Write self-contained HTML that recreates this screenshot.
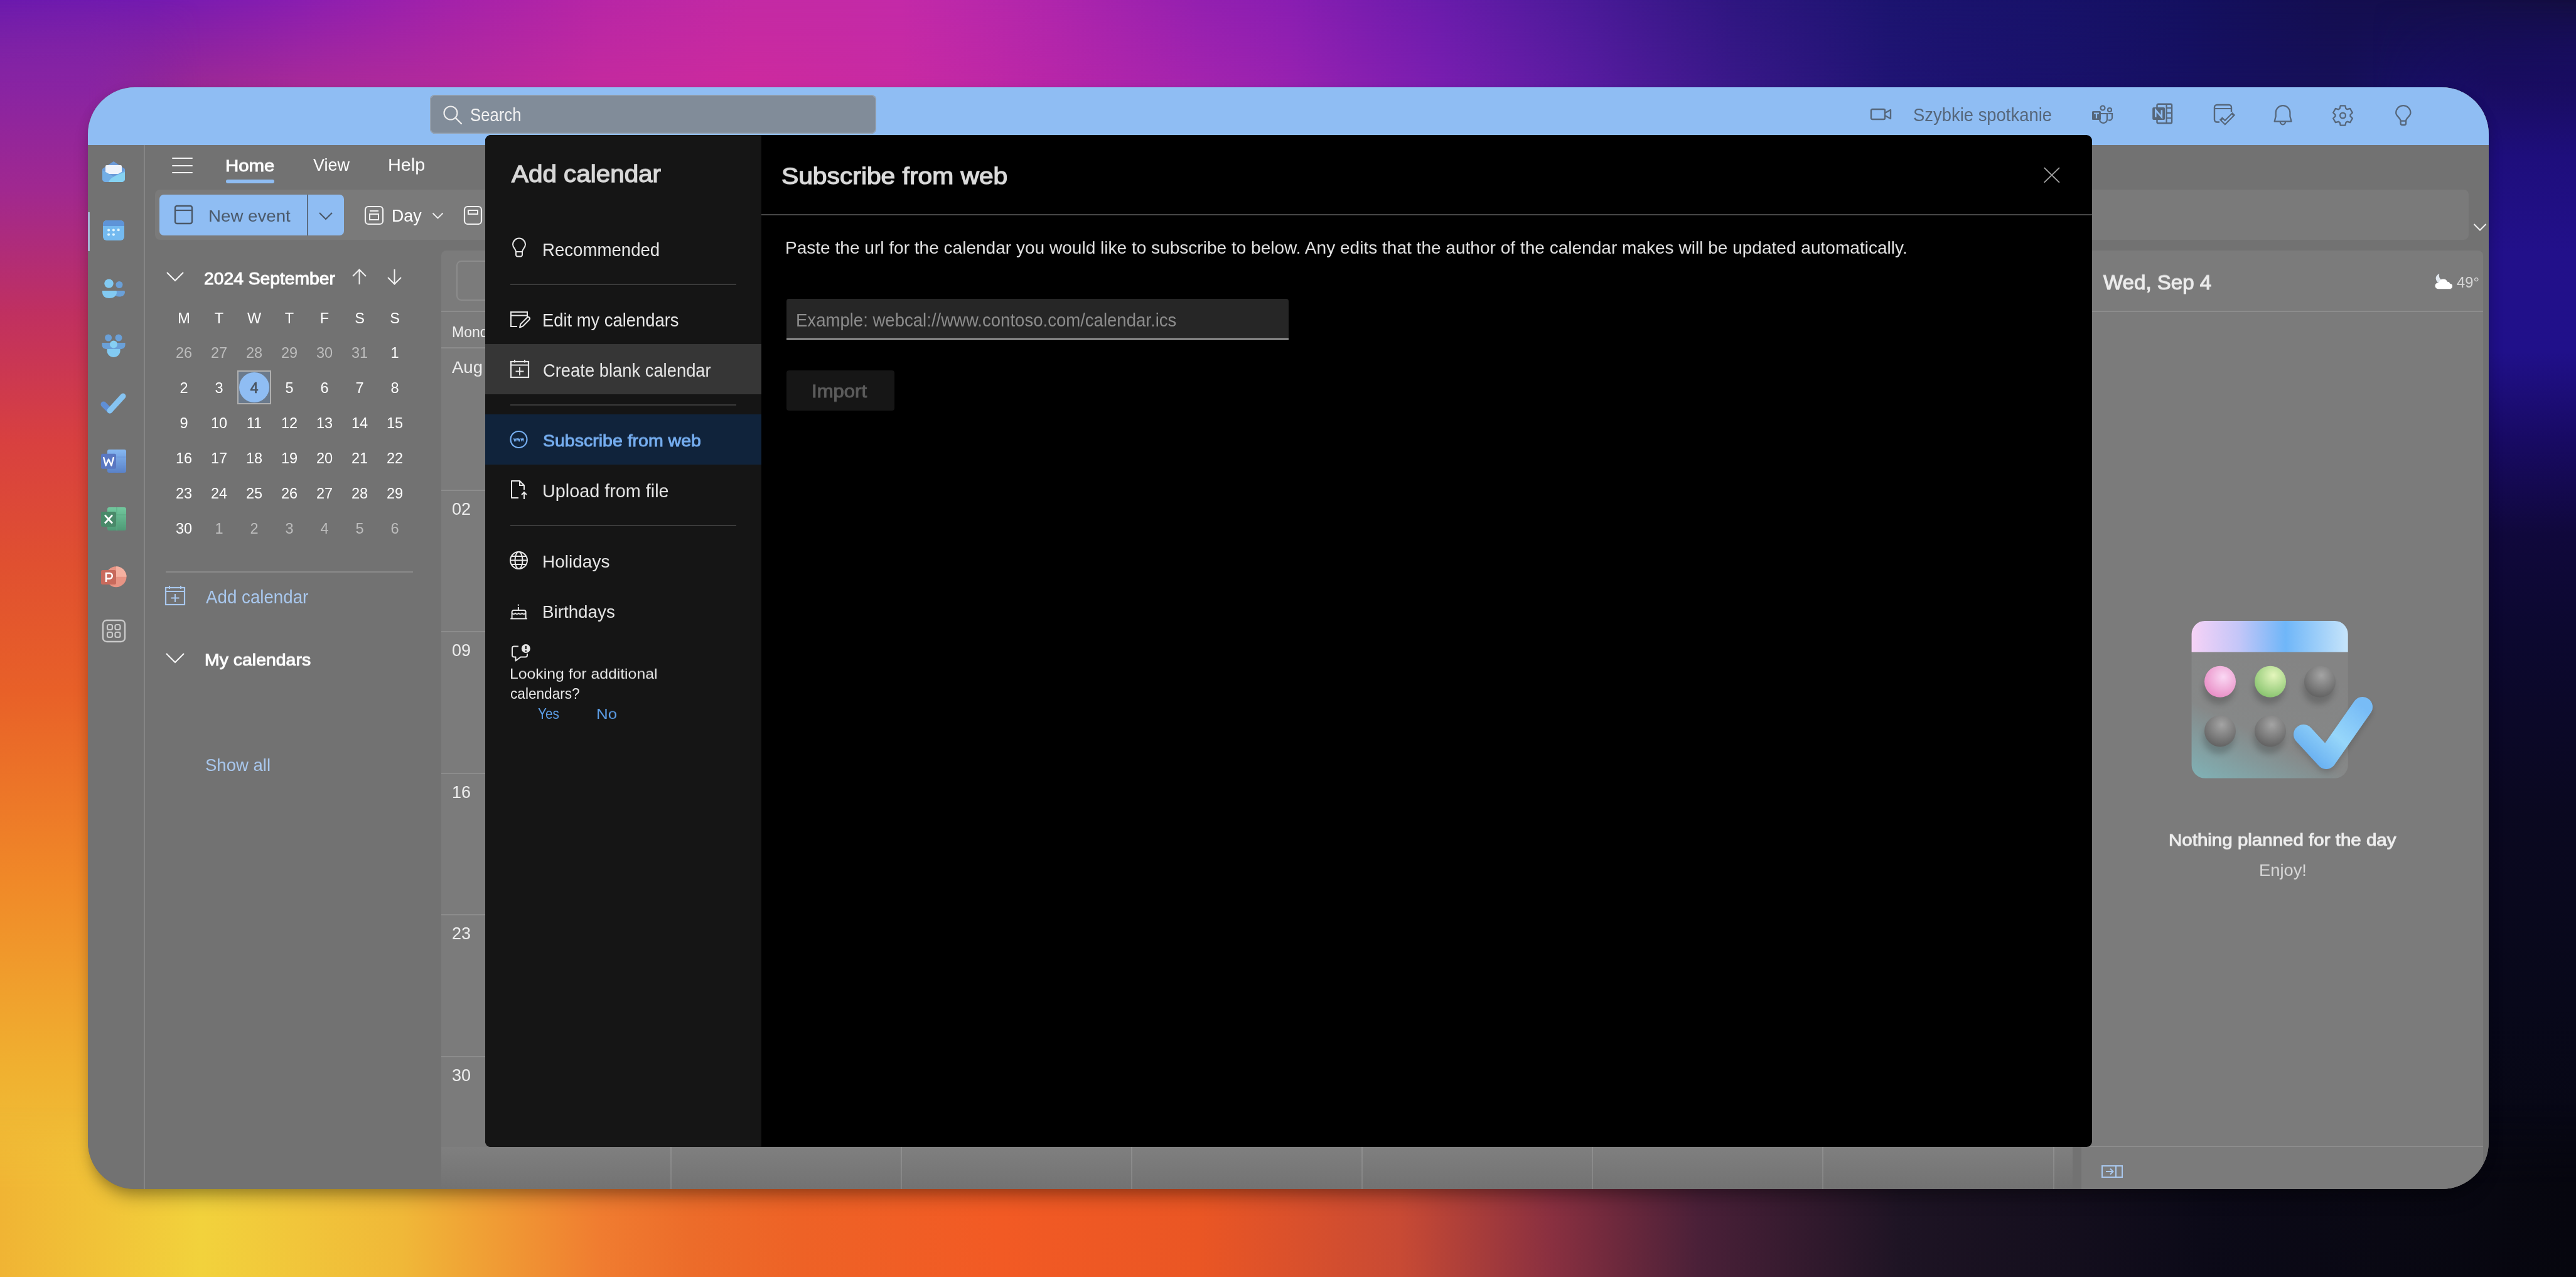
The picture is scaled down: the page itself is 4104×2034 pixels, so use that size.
<!DOCTYPE html>
<html><head><meta charset="utf-8"><style>
html,body{margin:0;padding:0;width:4104px;height:2034px;overflow:hidden;}
body{position:relative;font-family:"Liberation Sans",sans-serif;background:#1a1040;}
.t{position:absolute;white-space:nowrap;will-change:transform;}
.r{position:absolute;}
svg.r{overflow:visible;}
</style></head><body>
<div class="r" style="left:0px;top:0px;width:4104px;height:320px;background:linear-gradient(90deg,#6c1aae 0px,#741bb0 239px,#8a1eb0 478px,#a422aa 717px,#b826a6 956px,#c42aa4 1195px,#c42aa8 1434px,#b026ac 1673px,#9420b0 1912px,#8a1eb2 2052px,#6a1cac 2291px,#4a1a98 2530px,#2e1680 2769px,#1c1470 3008px,#18126a 3247px,#141060 3486px,#140e50 3725px,#140e48 3964px,#140e40 4104px);"></div><div class="r" style="left:0px;top:0px;width:4104px;height:320px;background:linear-gradient(90deg,#8a2898 0px,#962894 239px,#a82a98 478px,#b42a9c 717px,#c42a9e 956px,#cc2a9e 1195px,#c82aa2 1434px,#b826a8 1673px,#a424ae 1912px,#9822b0 2052px,#7a1eb0 2291px,#581ca0 2530px,#381888 2769px,#201474 3008px,#1a126c 3247px,#161062 3486px,#161058 3725px,#181070 3964px,#1c1080 4104px);-webkit-mask-image:linear-gradient(180deg,transparent 0px,#000 139px);"></div><div class="r" style="left:0px;top:0px;width:320px;height:2034px;background:linear-gradient(180deg,#7420b2 0px,#a02890 300px,#c03060 500px,#d84040 700px,#e05030 900px,#e86028 1100px,#f08828 1400px,#f0b030 1700px,#f0d040 2034px);-webkit-mask-image:linear-gradient(180deg,transparent 0px,#000 140px),linear-gradient(90deg,#000 140px,transparent 320px);-webkit-mask-composite:source-in;"></div><div class="r" style="left:3780px;top:0px;width:324px;height:2034px;background:linear-gradient(180deg,#140c48 0px,#180c5c 120px,#1e0e7c 250px,#22108a 400px,#20108a 560px,#180a64 700px,#10083c 850px,#0c0830 1000px,#0a0820 1300px,#08081a 1600px,#06060e 2034px);-webkit-mask-image:linear-gradient(180deg,transparent 0px,#000 140px),linear-gradient(90deg,transparent 0px,#000 185px);-webkit-mask-composite:source-in;"></div><div class="r" style="left:0px;top:1760px;width:4104px;height:274px;background:linear-gradient(90deg,#f0b434 0px,#f2d23c 320px,#f0b838 640px,#f07c30 956px,#ec6c2a 1100px,#ee6226 1274px,#f25a24 1593px,#ea5624 1911px,#c84a34 2230px,#8a3040 2469px,#4a2038 2708px,#1e1424 3027px,#0c0a18 3505px,#06060e 4104px);-webkit-mask-image:linear-gradient(180deg,transparent 0px,#000 134px);"></div><div class="r" style="left:140px;top:139px;width:3825px;height:1755px;border-radius:75px;background:#727272;box-shadow:0 20px 30px -10px rgba(0,0,0,0.34), 0 4px 18px rgba(0,0,0,0.10);"></div><div class="r" style="left:0;top:0;width:4104px;height:2034px;clip-path:inset(139px 139px 140px 140px round 75px);"><div class="r" style="left:140px;top:139px;width:3825px;height:1755px;background:#727272;"></div><div class="r" style="left:140px;top:139px;width:3825px;height:92px;background:#8fbdf3;"></div><div class="r" style="left:685px;top:151px;width:711px;height:62px;background:#818c99;border-radius:8px;box-shadow:inset 0 0 0 1.5px #95a3b3;"></div><svg class="r" style="left:704px;top:166px;" width="34" height="34" viewBox="0 0 34 34"><circle cx="14" cy="14" r="10.5" fill="none" stroke="#ececec" stroke-width="2.2"/><line x1="21.5" y1="21.5" x2="31" y2="31" stroke="#ececec" stroke-width="2.4" stroke-linecap="round"/></svg><div class="t" style="left:748.97px;top:172.23px;font-size:25.714px;line-height:25.714px;color:#f2f2f2;transform:scaleY(1.1135);transform-origin:0 21.77px;">Search</div><svg class="r" style="left:2978px;top:170px;" width="40" height="24" viewBox="0 0 40 24"><rect x="3" y="4" width="22" height="16" rx="2" fill="none" stroke="#56677b" stroke-width="2.4"/><path d="M25 10 L34 5 L34 19 L25 14" fill="none" stroke="#56677b" stroke-width="2.4" stroke-linejoin="round"/></svg><div class="t" style="left:3047.90px;top:169.78px;font-size:27.430px;line-height:27.430px;color:#56677b;transform:scaleY(1.0794);transform-origin:0 23.22px;">Szybkie spotkanie</div><svg class="r" style="left:3331px;top:166px;" width="38" height="34" viewBox="0 0 38 34"><circle cx="19" cy="6" r="3.5" fill="none" stroke="#56677b" stroke-width="2.2"/><circle cx="30" cy="9" r="3" fill="none" stroke="#56677b" stroke-width="2.2"/><path d="M14 15 h12 v9 a6 6 0 0 1 -12 0 z" fill="none" stroke="#56677b" stroke-width="2.2"/><path d="M28 15 h6 v7 a4 4 0 0 1 -6 3" fill="none" stroke="#56677b" stroke-width="2.2"/><rect x="2" y="11" width="14" height="14" rx="1.5" fill="#56677b"/><path d="M5 14.5 h8 M9 14.5 v8" stroke="#8fbdf3" stroke-width="2.2"/></svg><svg class="r" style="left:3428px;top:164px;" width="36" height="36" viewBox="0 0 36 36"><rect x="8.5" y="1.8" width="23.6" height="30.4" rx="2" fill="none" stroke="#56677b" stroke-width="2.4"/><line x1="23.6" y1="1.8" x2="23.6" y2="32.2" stroke="#56677b" stroke-width="2.2"/><path d="M23.6 8 H32 M23.6 15.8 H32 M23.6 24 H32" stroke="#56677b" stroke-width="2.2"/><rect x="1.2" y="7" width="19.9" height="19.9" rx="2" fill="#56677b"/><path d="M6.3 22.5 V11.3 L15.9 22.5 V11.3" fill="none" stroke="#8fbdf3" stroke-width="2.6" stroke-linejoin="miter"/></svg><svg class="r" style="left:3525px;top:164px;" width="40" height="36" viewBox="0 0 40 36"><path d="M11 30.5 H7 a4 4 0 0 1 -4 -4 V7 a4 4 0 0 1 4 -4 H26 a4 4 0 0 1 4 4 V14" fill="none" stroke="#56677b" stroke-width="2.4"/><line x1="3" y1="9" x2="30" y2="9" stroke="#56677b" stroke-width="2.2"/><path d="M15.5 26.8 L19.8 31 L31.5 19.3" fill="none" stroke="#56677b" stroke-width="6.6" stroke-linejoin="miter" stroke-linecap="square"/><path d="M15.5 26.8 L19.8 31 L31.5 19.3" fill="none" stroke="#8fbdf3" stroke-width="2.4" stroke-linejoin="miter" stroke-linecap="butt"/></svg><svg class="r" style="left:3620px;top:166px;" width="36" height="36" viewBox="0 0 36 36"><path d="M5.7 19.3 V13.5 a11.35 11.4 0 0 1 22.7 0 V19.3 L30.5 27.4 H3.7 z" fill="none" stroke="#56677b" stroke-width="2.3" stroke-linejoin="round"/><path d="M12.8 28 a4.1 4.3 0 0 0 8.2 0" fill="none" stroke="#56677b" stroke-width="2.3"/></svg><svg class="r" style="left:3716px;top:167px;" width="34" height="34" viewBox="0 0 34 34"><polygon points="12.70,1.46 20.30,1.46 21.39,6.04 23.47,7.23 28.06,5.94 31.86,12.52 28.44,15.76 28.44,18.16 31.86,21.48 28.06,28.06 23.54,26.72 21.47,27.92 20.30,32.54 12.70,32.54 11.61,27.96 9.53,26.77 4.94,28.06 1.14,21.48 4.56,18.24 4.56,15.84 1.14,12.52 4.94,5.94 9.46,7.28 11.53,6.08" fill="none" stroke="#56677b" stroke-width="2.3" stroke-linejoin="round"/><circle cx="16.5" cy="17" r="4.4" fill="none" stroke="#56677b" stroke-width="2.3"/></svg><svg class="r" style="left:3813px;top:166px;" width="32" height="36" viewBox="0 0 32 36"><path d="M11.6 26.6 C11.6 22 4.2 19 4.2 13.7 a11.6 11.6 0 0 1 23.2 0 C27.4 19 20.1 22 20.1 26.6 z" fill="none" stroke="#56677b" stroke-width="2.3" stroke-linejoin="round"/><path d="M11.6 26.6 V30.2 a2.8 2.8 0 0 0 2.8 2.8 H17.3 a2.8 2.8 0 0 0 2.8 -2.8 V26.6" fill="none" stroke="#56677b" stroke-width="2.3"/></svg><div class="r" style="left:229px;top:231px;width:2px;height:1663px;background:#858585;"></div><div class="r" style="left:140px;top:338px;width:2.5px;height:62px;background:#a3b6d4;"></div><svg class="r" style="left:160px;top:254px;" width="42" height="40" viewBox="0 0 42 40"><path d="M3 15 L21 3 L39 15 V31 a5 5 0 0 1 -5 5 H8 a5 5 0 0 1 -5 -5 z" fill="#6a9ad8"/><rect x="8" y="9" width="26" height="14" rx="2" fill="#eef3fb"/><path d="M3 17 L21 27 L39 17 V31 a5 5 0 0 1 -5 5 H8 a5 5 0 0 1 -5 -5 z" fill="#72aee6"/><path d="M13 36 C16 28 26 25 39 20 V31 a5 5 0 0 1 -5 5 z" fill="#86d2f2"/></svg><svg class="r" style="left:162px;top:349px;" width="38" height="36" viewBox="0 0 38 36"><rect x="2" y="2" width="34" height="32" rx="6" fill="#74baf0"/><path d="M2 11 V8 a6 6 0 0 1 6 -6 H30 a6 6 0 0 1 6 6 V11 z" fill="#5e94d8"/><g fill="#dff4fd"><circle cx="11.1" cy="17.5" r="2.1"/><circle cx="18.9" cy="17.5" r="2.1"/><circle cx="26.7" cy="17.2" r="2.1"/><circle cx="11.1" cy="24.6" r="2.1"/><circle cx="18.9" cy="24.6" r="2.1"/></g></svg><svg class="r" style="left:160px;top:441px;" width="42" height="36" viewBox="0 0 42 36"><circle cx="30" cy="12.5" r="5.5" fill="#6aa0d8"/><path d="M22 22 H37 a2 2 0 0 1 2 2 C39 29 35 31.5 30 31.5 C26 31.5 23 30 22 28 z" fill="#6aa0d8"/><circle cx="13.5" cy="10.6" r="7.2" fill="#82caf2"/><path d="M3 22 H24 a2 2 0 0 1 2 2 C26 31 20 34 14 34 C8 34 3 31 3 24 a2 2 0 0 1 0 0 z" fill="#82caf2"/></svg><svg class="r" style="left:160px;top:530px;" width="42" height="42" viewBox="0 0 42 42"><circle cx="12.6" cy="8" r="5.5" fill="#6aa0d8"/><circle cx="29" cy="8" r="5.5" fill="#6aa0d8"/><path d="M2.5 16 H39.5 V19 C39.5 24 36 26 32 26 H10 C6 26 2.5 24 2.5 19 z" fill="#6aa0d8"/><path d="M10.5 26 H31.5 V29 C31.5 35 26 39 21 39 C16 39 10.5 35 10.5 29 z" fill="#82caf2"/><circle cx="21" cy="18.5" r="6" fill="#86cff4"/></svg><svg class="r" style="left:158px;top:622px;" width="46" height="40" viewBox="0 0 46 40"><path d="M7 22 L17 32" stroke="#5f8fd6" stroke-width="9" stroke-linecap="round"/><path d="M17 32 L38 9" stroke="#86c4f2" stroke-width="9" stroke-linecap="round"/></svg><svg class="r" style="left:158px;top:713px;" width="46" height="44" viewBox="0 0 46 44"><defs><linearGradient id="wg" x1="0" y1="0" x2="0" y2="1"><stop offset="0" stop-color="#86b8f2"/><stop offset="1" stop-color="#5a82c8"/></linearGradient></defs><rect x="13" y="3" width="30" height="37" rx="3" fill="url(#wg)"/><path d="M13 15 H43 M13 27 H43" stroke="#6a96da" stroke-width="1"/><rect x="3" y="9.7" width="24" height="24" rx="2.5" fill="#5a78c2"/><path d="M7 15 L10.5 28.5 L15 18.5 L19.5 28.5 L23 15" fill="none" stroke="#fff" stroke-width="2.4" stroke-linejoin="round"/></svg><svg class="r" style="left:158px;top:805px;" width="46" height="44" viewBox="0 0 46 44"><defs><linearGradient id="xg" x1="0" y1="0" x2="0" y2="1"><stop offset="0" stop-color="#72c89e"/><stop offset="1" stop-color="#4f9a76"/></linearGradient></defs><rect x="13" y="3" width="30" height="37" rx="3" fill="url(#xg)"/><path d="M28 3 V40 M13 15 H43 M13 27 H43" stroke="#5aaa82" stroke-width="1"/><rect x="3" y="10" width="24" height="24" rx="2.5" fill="#4a8a6a"/><path d="M9 15.5 L21 28.5 M21 15.5 L9 28.5" fill="none" stroke="#fff" stroke-width="2.6"/></svg><svg class="r" style="left:158px;top:898px;" width="46" height="44" viewBox="0 0 46 44"><circle cx="27" cy="20.7" r="16.5" fill="#e89484"/><path d="M27 4.2 A16.5 16.5 0 0 1 43.5 20.7 H27 z" fill="#f4b0a0"/><rect x="3" y="10" width="24" height="23" rx="2.5" fill="#c86a5c"/><path d="M11 29 V15 H16.5 a4.3 4.3 0 0 1 0 8.6 H11" fill="none" stroke="#fff" stroke-width="2.6"/></svg><svg class="r" style="left:161px;top:985px;" width="40" height="40" viewBox="0 0 40 40"><rect x="3" y="3" width="35" height="34" rx="6" fill="none" stroke="#c9c9c9" stroke-width="2.4"/><g fill="none" stroke="#c9c9c9" stroke-width="2.2"><rect x="10" y="10" width="8" height="8" rx="2.5"/><rect x="22.5" y="10" width="8" height="8" rx="2.5"/><rect x="10" y="22" width="8" height="8" rx="2.5"/><rect x="22.5" y="22" width="8" height="8" rx="2.5"/></g></svg><div class="r" style="left:274px;top:251px;width:33px;height:2.1999999999999886px;background:#f4f4f4;border-radius:1px;"></div><div class="r" style="left:274px;top:262.5px;width:33px;height:2.1999999999999886px;background:#f4f4f4;border-radius:1px;"></div><div class="r" style="left:274px;top:274px;width:33px;height:2.1999999999999886px;background:#f4f4f4;border-radius:1px;"></div><div class="t" style="left:359.16px;top:247.62px;font-size:29.391px;line-height:29.391px;color:#ffffff;-webkit-text-stroke:1.01px #ffffff;transform:scaleY(0.9048);transform-origin:0 24.88px;">Home</div><div class="r" style="left:360px;top:286px;width:77px;height:6px;background:#8fbdf3;border-radius:3px;"></div><div class="t" style="left:498.80px;top:249.66px;font-size:26.979px;line-height:26.979px;color:#ffffff;transform:scaleY(1.0095);transform-origin:0 22.84px;">View</div><div class="t" style="left:617.69px;top:248.07px;font-size:28.859px;line-height:28.859px;color:#ffffff;transform:scaleY(0.9437);transform-origin:0 24.43px;">Help</div><div class="r" style="left:247px;top:302px;width:3686px;height:80px;background:#7a7a7a;border-radius:8px;"></div><div class="r" style="left:3941px;top:357px;width:20px;height:12px;background:transparent;"></div><svg class="r" style="left:3940px;top:355px;" width="22" height="14" viewBox="0 0 22 14"><path d="M1.5 2 L11 11.5 L20.5 2" fill="none" stroke="#f0f0f0" stroke-width="2"/></svg><div class="r" style="left:254px;top:310px;width:294px;height:65px;background:#8fbdf3;border-radius:7px;"></div><div class="r" style="left:489px;top:310px;width:1.5px;height:65px;background:#5c6d82;"></div><svg class="r" style="left:277px;top:326px;" width="32" height="32" viewBox="0 0 32 32"><rect x="2" y="2" width="27" height="28" rx="3" fill="none" stroke="#4a5868" stroke-width="2.4"/><line x1="2" y1="9" x2="29" y2="9" stroke="#4a5868" stroke-width="2.2"/></svg><div class="t" style="left:331.58px;top:329.75px;font-size:27.697px;line-height:27.697px;color:#4a5868;transform:scaleY(0.9480);transform-origin:0 23.45px;">New event</div><svg class="r" style="left:507px;top:337px;" width="24" height="15" viewBox="0 0 24 15"><path d="M2 2 L12 12 L22 2" fill="none" stroke="#4a5868" stroke-width="2.2"/></svg><svg class="r" style="left:580px;top:327px;" width="32" height="32" viewBox="0 0 32 32"><rect x="2" y="2" width="28" height="28" rx="5" fill="none" stroke="#f0f0f0" stroke-width="2.2"/><line x1="9" y1="9" x2="23" y2="9" stroke="#f0f0f0" stroke-width="2"/><rect x="9" y="14" width="14" height="9" fill="none" stroke="#f0f0f0" stroke-width="2"/></svg><div class="t" style="left:623.86px;top:331.17px;font-size:26.732px;line-height:26.732px;color:#ffffff;transform:scaleY(1.0083);transform-origin:0 22.63px;">Day</div><svg class="r" style="left:688px;top:338px;" width="19" height="12" viewBox="0 0 19 12"><path d="M1.5 1.5 L9.5 9.5 L17.5 1.5" fill="none" stroke="#f0f0f0" stroke-width="1.8"/></svg><svg class="r" style="left:738px;top:327px;" width="32" height="32" viewBox="0 0 32 32"><rect x="2" y="2" width="27" height="28" rx="5" fill="none" stroke="#f0f0f0" stroke-width="2.2"/><rect x="8" y="8" width="15" height="6" fill="none" stroke="#f0f0f0" stroke-width="2"/></svg><svg class="r" style="left:264px;top:432px;" width="30" height="18" viewBox="0 0 30 18"><path d="M2 2 L15 15 L28 2" fill="none" stroke="#f4f4f4" stroke-width="2.2"/></svg><div class="t" style="left:324.77px;top:428.67px;font-size:28.267px;line-height:28.267px;color:#ffffff;-webkit-text-stroke:0.98px #ffffff;transform:scaleY(0.9939);transform-origin:0 23.93px;">2024 September</div><svg class="r" style="left:558px;top:427px;" width="30" height="28" viewBox="0 0 30 28"><path d="M14.5 26 V3 M4 13 L14.5 2.5 L25 13" fill="none" stroke="#f0f0f0" stroke-width="2"/></svg><svg class="r" style="left:614px;top:427px;" width="30" height="28" viewBox="0 0 30 28"><path d="M14.5 2 V25 M4 15 L14.5 25.5 L25 15" fill="none" stroke="#f0f0f0" stroke-width="2"/></svg><div class="t" style="left:-707.4px;width:2000px;text-align:center;top:495.8px;font-size:23.5px;line-height:23.5px;color:#ffffff;">M</div><div class="t" style="left:-651.0px;width:2000px;text-align:center;top:495.8px;font-size:23.5px;line-height:23.5px;color:#ffffff;">T</div><div class="t" style="left:-595.4px;width:2000px;text-align:center;top:495.8px;font-size:23.5px;line-height:23.5px;color:#ffffff;">W</div><div class="t" style="left:-539.0px;width:2000px;text-align:center;top:495.8px;font-size:23.5px;line-height:23.5px;color:#ffffff;">T</div><div class="t" style="left:-483.0px;width:2000px;text-align:center;top:495.8px;font-size:23.5px;line-height:23.5px;color:#ffffff;">F</div><div class="t" style="left:-427.4px;width:2000px;text-align:center;top:495.8px;font-size:23.5px;line-height:23.5px;color:#ffffff;">S</div><div class="t" style="left:-371.0px;width:2000px;text-align:center;top:495.8px;font-size:23.5px;line-height:23.5px;color:#ffffff;">S</div><div class="r" style="left:378px;top:590px;width:54px;height:54px;background:#6b7a8c;box-shadow:inset 0 0 0 2px #b0b0b0;"></div><div class="r" style="left:381px;top:593px;width:48px;height:48px;border-radius:50%;background:#8fbdf3;"></div><div class="t" style="left:-707.4px;width:2000px;text-align:center;top:550.7px;font-size:23.5px;line-height:23.5px;color:#bdbdbd;">26</div><div class="t" style="left:-651.0px;width:2000px;text-align:center;top:550.7px;font-size:23.5px;line-height:23.5px;color:#bdbdbd;">27</div><div class="t" style="left:-595.4px;width:2000px;text-align:center;top:550.7px;font-size:23.5px;line-height:23.5px;color:#bdbdbd;">28</div><div class="t" style="left:-539.0px;width:2000px;text-align:center;top:550.7px;font-size:23.5px;line-height:23.5px;color:#bdbdbd;">29</div><div class="t" style="left:-483.0px;width:2000px;text-align:center;top:550.7px;font-size:23.5px;line-height:23.5px;color:#bdbdbd;">30</div><div class="t" style="left:-427.4px;width:2000px;text-align:center;top:550.7px;font-size:23.5px;line-height:23.5px;color:#bdbdbd;">31</div><div class="t" style="left:-371.0px;width:2000px;text-align:center;top:550.7px;font-size:23.5px;line-height:23.5px;color:#ffffff;">1</div><div class="t" style="left:-707.4px;width:2000px;text-align:center;top:607.4px;font-size:23.5px;line-height:23.5px;color:#ffffff;">2</div><div class="t" style="left:-651.0px;width:2000px;text-align:center;top:607.4px;font-size:23.5px;line-height:23.5px;color:#ffffff;">3</div><div class="t" style="left:-595.4px;width:2000px;text-align:center;top:607.4px;font-size:23.5px;line-height:23.5px;color:#4a5562;-webkit-text-stroke:0.7px #4a5562;">4</div><div class="t" style="left:-539.0px;width:2000px;text-align:center;top:607.4px;font-size:23.5px;line-height:23.5px;color:#ffffff;">5</div><div class="t" style="left:-483.0px;width:2000px;text-align:center;top:607.4px;font-size:23.5px;line-height:23.5px;color:#ffffff;">6</div><div class="t" style="left:-427.4px;width:2000px;text-align:center;top:607.4px;font-size:23.5px;line-height:23.5px;color:#ffffff;">7</div><div class="t" style="left:-371.0px;width:2000px;text-align:center;top:607.4px;font-size:23.5px;line-height:23.5px;color:#ffffff;">8</div><div class="t" style="left:-707.4px;width:2000px;text-align:center;top:662.7px;font-size:23.5px;line-height:23.5px;color:#ffffff;">9</div><div class="t" style="left:-651.0px;width:2000px;text-align:center;top:662.7px;font-size:23.5px;line-height:23.5px;color:#ffffff;">10</div><div class="t" style="left:-595.4px;width:2000px;text-align:center;top:662.7px;font-size:23.5px;line-height:23.5px;color:#ffffff;">11</div><div class="t" style="left:-539.0px;width:2000px;text-align:center;top:662.7px;font-size:23.5px;line-height:23.5px;color:#ffffff;">12</div><div class="t" style="left:-483.0px;width:2000px;text-align:center;top:662.7px;font-size:23.5px;line-height:23.5px;color:#ffffff;">13</div><div class="t" style="left:-427.4px;width:2000px;text-align:center;top:662.7px;font-size:23.5px;line-height:23.5px;color:#ffffff;">14</div><div class="t" style="left:-371.0px;width:2000px;text-align:center;top:662.7px;font-size:23.5px;line-height:23.5px;color:#ffffff;">15</div><div class="t" style="left:-707.4px;width:2000px;text-align:center;top:719.4px;font-size:23.5px;line-height:23.5px;color:#ffffff;">16</div><div class="t" style="left:-651.0px;width:2000px;text-align:center;top:719.4px;font-size:23.5px;line-height:23.5px;color:#ffffff;">17</div><div class="t" style="left:-595.4px;width:2000px;text-align:center;top:719.4px;font-size:23.5px;line-height:23.5px;color:#ffffff;">18</div><div class="t" style="left:-539.0px;width:2000px;text-align:center;top:719.4px;font-size:23.5px;line-height:23.5px;color:#ffffff;">19</div><div class="t" style="left:-483.0px;width:2000px;text-align:center;top:719.4px;font-size:23.5px;line-height:23.5px;color:#ffffff;">20</div><div class="t" style="left:-427.4px;width:2000px;text-align:center;top:719.4px;font-size:23.5px;line-height:23.5px;color:#ffffff;">21</div><div class="t" style="left:-371.0px;width:2000px;text-align:center;top:719.4px;font-size:23.5px;line-height:23.5px;color:#ffffff;">22</div><div class="t" style="left:-707.4px;width:2000px;text-align:center;top:774.7px;font-size:23.5px;line-height:23.5px;color:#ffffff;">23</div><div class="t" style="left:-651.0px;width:2000px;text-align:center;top:774.7px;font-size:23.5px;line-height:23.5px;color:#ffffff;">24</div><div class="t" style="left:-595.4px;width:2000px;text-align:center;top:774.7px;font-size:23.5px;line-height:23.5px;color:#ffffff;">25</div><div class="t" style="left:-539.0px;width:2000px;text-align:center;top:774.7px;font-size:23.5px;line-height:23.5px;color:#ffffff;">26</div><div class="t" style="left:-483.0px;width:2000px;text-align:center;top:774.7px;font-size:23.5px;line-height:23.5px;color:#ffffff;">27</div><div class="t" style="left:-427.4px;width:2000px;text-align:center;top:774.7px;font-size:23.5px;line-height:23.5px;color:#ffffff;">28</div><div class="t" style="left:-371.0px;width:2000px;text-align:center;top:774.7px;font-size:23.5px;line-height:23.5px;color:#ffffff;">29</div><div class="t" style="left:-707.4px;width:2000px;text-align:center;top:831.4px;font-size:23.5px;line-height:23.5px;color:#ffffff;">30</div><div class="t" style="left:-651.0px;width:2000px;text-align:center;top:831.4px;font-size:23.5px;line-height:23.5px;color:#bdbdbd;">1</div><div class="t" style="left:-595.4px;width:2000px;text-align:center;top:831.4px;font-size:23.5px;line-height:23.5px;color:#bdbdbd;">2</div><div class="t" style="left:-539.0px;width:2000px;text-align:center;top:831.4px;font-size:23.5px;line-height:23.5px;color:#bdbdbd;">3</div><div class="t" style="left:-483.0px;width:2000px;text-align:center;top:831.4px;font-size:23.5px;line-height:23.5px;color:#bdbdbd;">4</div><div class="t" style="left:-427.4px;width:2000px;text-align:center;top:831.4px;font-size:23.5px;line-height:23.5px;color:#bdbdbd;">5</div><div class="t" style="left:-371.0px;width:2000px;text-align:center;top:831.4px;font-size:23.5px;line-height:23.5px;color:#bdbdbd;">6</div><div class="r" style="left:264px;top:910px;width:394px;height:2px;background:#8a8a8a;"></div><svg class="r" style="left:261px;top:931px;" width="36" height="34" viewBox="0 0 36 34"><rect x="3" y="5" width="30" height="27" fill="none" stroke="#a9c8ee" stroke-width="2.2"/><line x1="3" y1="11" x2="33" y2="11" stroke="#a9c8ee" stroke-width="2"/><line x1="9" y1="2" x2="9" y2="7" stroke="#a9c8ee" stroke-width="2"/><line x1="27" y1="2" x2="27" y2="7" stroke="#a9c8ee" stroke-width="2"/><path d="M18 15 V28 M11.5 21.5 H24.5" stroke="#a9c8ee" stroke-width="2"/></svg><div class="t" style="left:327.70px;top:938.03px;font-size:27.721px;line-height:27.721px;color:#a9c8ee;transform:scaleY(1.0328);transform-origin:0 23.47px;">Add calendar</div><svg class="r" style="left:263px;top:1039px;" width="32" height="20" viewBox="0 0 32 20"><path d="M2 2 L16 16 L30 2" fill="none" stroke="#f4f4f4" stroke-width="2.2"/></svg><div class="t" style="left:325.92px;top:1035.92px;font-size:28.444px;line-height:28.444px;color:#ffffff;-webkit-text-stroke:0.98px #ffffff;transform:scaleY(0.9589);transform-origin:0 24.08px;">My calendars</div><div class="t" style="left:326.60px;top:1205.38px;font-size:27.545px;line-height:27.545px;color:#a9c8ee;transform:scaleY(0.9989);transform-origin:0 23.32px;">Show all</div><div class="r" style="left:703px;top:399px;width:2599px;height:1495px;background:#7b7b7b;border-top-left-radius:8px;border-top-right-radius:8px;"></div><div class="r" style="left:727px;top:415px;width:173px;height:64px;background:transparent;border:2px solid #8c8c8c;border-radius:8px;box-sizing:border-box;"></div><div class="r" style="left:703px;top:494.5px;width:2599px;height:2.0px;background:#8c8c8c;"></div><div class="t" style="left:720.0px;top:517.5px;font-size:23px;line-height:23px;color:#eeeeee;">Monday</div><div class="r" style="left:703px;top:553px;width:2599px;height:2px;background:#8c8c8c;"></div><div class="t" style="left:720.00px;top:571.47px;font-size:27.566px;line-height:27.566px;color:#eeeeee;transform:scaleY(0.9627);transform-origin:0 23.33px;">Aug</div><div class="r" style="left:703px;top:780px;width:2599px;height:2px;background:#8c8c8c;"></div><div class="t" style="left:720.0px;top:798.1px;font-size:27px;line-height:27px;color:#eeeeee;">02</div><div class="r" style="left:703px;top:1005px;width:2599px;height:2px;background:#8c8c8c;"></div><div class="t" style="left:720.0px;top:1023.1px;font-size:27px;line-height:27px;color:#eeeeee;">09</div><div class="r" style="left:703px;top:1231px;width:2599px;height:2px;background:#8c8c8c;"></div><div class="t" style="left:720.0px;top:1249.1px;font-size:27px;line-height:27px;color:#eeeeee;">16</div><div class="r" style="left:703px;top:1456px;width:2599px;height:2px;background:#8c8c8c;"></div><div class="t" style="left:720.0px;top:1474.1px;font-size:27px;line-height:27px;color:#eeeeee;">23</div><div class="r" style="left:703px;top:1682px;width:2599px;height:2px;background:#8c8c8c;"></div><div class="t" style="left:720.0px;top:1700.1px;font-size:27px;line-height:27px;color:#eeeeee;">30</div><div class="r" style="left:1068px;top:399px;width:2px;height:1495px;background:#8c8c8c;"></div><div class="r" style="left:1435px;top:399px;width:2px;height:1495px;background:#8c8c8c;"></div><div class="r" style="left:1802px;top:399px;width:2px;height:1495px;background:#8c8c8c;"></div><div class="r" style="left:2169px;top:399px;width:2px;height:1495px;background:#8c8c8c;"></div><div class="r" style="left:2536px;top:399px;width:2px;height:1495px;background:#8c8c8c;"></div><div class="r" style="left:2903px;top:399px;width:2px;height:1495px;background:#8c8c8c;"></div><div class="r" style="left:3271px;top:399px;width:2px;height:1495px;background:#8c8c8c;"></div><div class="r" style="left:703px;top:1827px;width:2599px;height:67px;background:linear-gradient(180deg,rgba(255,255,255,0.03) 0,rgba(0,0,0,0.07) 100%);"></div><div class="r" style="left:3316px;top:399px;width:640px;height:1495px;background:#7b7b7b;border-top-left-radius:8px;border-top-right-radius:8px;"></div><div class="t" style="left:3350.57px;top:432.60px;font-size:33.075px;line-height:33.075px;color:#ececec;-webkit-text-stroke:1.14px #ececec;transform:scaleY(0.9813);transform-origin:0 28.00px;">Wed, Sep 4</div><svg class="r" style="left:3877px;top:433px;" width="36" height="32" viewBox="0 0 36 32"><circle cx="11.5" cy="10.5" r="7.8" fill="#e2e8ef"/><circle cx="15.8" cy="6.2" r="7" fill="#7b7b7b"/><path d="M6.2 27 a4.9 4.9 0 0 1 2.5 -9.6 a7 7 0 0 1 13.4 -1.6 a3.9 3.9 0 0 1 4 3 a3.9 3.9 0 0 1 -0.3 8.2 z" fill="#ffffff"/><path d="M6.5 27.6 H28.5" stroke="#959595" stroke-width="1.2"/></svg><div class="t" style="left:3913.53px;top:438.91px;font-size:23.738px;line-height:23.738px;color:#d6d6d6;transform:scaleY(1.0002);transform-origin:0 20.09px;">49°</div><div class="r" style="left:3316px;top:494.5px;width:640px;height:2.0px;background:#8c8c8c;"></div><div class="r" style="left:3316px;top:1824.5px;width:640px;height:2.0px;background:#8c8c8c;"></div><svg class="r" style="left:3347px;top:1855px;" width="36" height="22" viewBox="0 0 36 22"><rect x="2" y="2" width="32" height="18" fill="none" stroke="#a9c8ee" stroke-width="2"/><line x1="24" y1="2" x2="24" y2="20" stroke="#a9c8ee" stroke-width="2"/><path d="M8 11 H19 M15 6.5 L19.5 11 L15 15.5" fill="none" stroke="#a9c8ee" stroke-width="2"/></svg><svg class="r" style="left:3480px;top:980px;" width="320" height="280" viewBox="0 0 320 280"><defs>
<linearGradient id="hdr" x1="0" y1="0" x2="1" y2="0"><stop offset="0" stop-color="#f6d2f6"/><stop offset="0.3" stop-color="#c4c6f8"/><stop offset="0.6" stop-color="#6fb6f8"/><stop offset="1" stop-color="#c6e4fa"/></linearGradient>
<linearGradient id="bod" x1="0" y1="1" x2="0.6" y2="0"><stop offset="0" stop-color="#80b2b6"/><stop offset="0.45" stop-color="#868888"/><stop offset="1" stop-color="#848484"/></linearGradient>
<radialGradient id="pk" cx="0.6" cy="0.35" r="0.7"><stop offset="0" stop-color="#fad8f4"/><stop offset="1" stop-color="#e88cc4"/></radialGradient>
<radialGradient id="gr" cx="0.6" cy="0.3" r="0.7"><stop offset="0" stop-color="#e4f6bc"/><stop offset="1" stop-color="#8cc672"/></radialGradient>
<radialGradient id="gy" cx="0.55" cy="0.3" r="0.75"><stop offset="0" stop-color="#a4a4a4"/><stop offset="1" stop-color="#5e5e5e"/></radialGradient>
<linearGradient id="ck" x1="0" y1="1" x2="1" y2="0"><stop offset="0" stop-color="#64acf0"/><stop offset="0.5" stop-color="#96d6fa"/><stop offset="1" stop-color="#78bcf6"/></linearGradient>
<filter id="bl" x="-50%" y="-50%" width="200%" height="200%"><feGaussianBlur stdDeviation="5"/></filter>
</defs>
<path d="M11.6 59 H260.7 V238.5 a21 21 0 0 1 -21 21 H32.6 a21 21 0 0 1 -21 -21 z" fill="url(#bod)"/>
<path d="M11.6 58.7 V30 a21 21 0 0 1 21 -21 H239.7 a21 21 0 0 1 21 21 V58.7 z" fill="url(#hdr)"/>
<g fill="#000" opacity="0.18" filter="url(#bl)"><circle cx="55" cy="117" r="25"/><circle cx="135" cy="117" r="25"/><circle cx="214" cy="117" r="25"/><circle cx="55" cy="196" r="25"/><circle cx="135" cy="196" r="25"/></g>
<circle cx="57" cy="105.7" r="25" fill="url(#pk)"/>
<circle cx="137" cy="105.7" r="25" fill="url(#gr)"/>
<circle cx="216" cy="105.7" r="25" fill="url(#gy)"/>
<circle cx="57" cy="184.4" r="25" fill="url(#gy)"/>
<circle cx="137" cy="184.4" r="25" fill="url(#gy)"/>
<path d="M190 190 L226 229 L284 146" fill="none" stroke="#000" stroke-opacity="0.15" stroke-width="32" stroke-linecap="round" stroke-linejoin="round" filter="url(#bl)" transform="translate(0,6)"/>
<path d="M190 190 L226 229 L284 146" fill="none" stroke="url(#ck)" stroke-width="32" stroke-linecap="round" stroke-linejoin="round"/>
</svg><div class="t" style="left:3454.85px;top:1322.02px;font-size:29.515px;line-height:29.515px;color:#eeeeee;-webkit-text-stroke:1.02px #eeeeee;transform:scaleY(0.9103);transform-origin:0 24.98px;">Nothing planned for the day</div><div class="t" style="left:3598.81px;top:1371.66px;font-size:27.341px;line-height:27.341px;color:#d8d8d8;transform:scaleY(0.9604);transform-origin:0 23.14px;">Enjoy!</div></div><div class="r" style="left:773px;top:215px;width:2560px;height:1612px;border-radius:9px;overflow:hidden;background:#000;"><div class="r" style="left:0;top:0;width:440px;height:1612px;background:#151515;"></div></div><div class="t" style="left:814.50px;top:255.79px;font-size:40.409px;line-height:40.409px;color:#d8d8d8;-webkit-text-stroke:1.39px #d8d8d8;transform:scaleY(0.9382);transform-origin:0 34.21px;">Add calendar</div><svg class="r" style="left:814px;top:380px;" width="26" height="32" viewBox="0 0 26 32"><path d="M8 21 C8 17 3 14.5 3 9.5 a10 10 0 0 1 20 0 C23 14.5 18 17 18 21 z" fill="none" stroke="#e6e6e6" stroke-width="2" stroke-linejoin="round"/><path d="M8 21 V26 a2.5 2.5 0 0 0 2.5 2.5 h5 a2.5 2.5 0 0 0 2.5 -2.5 V21" fill="none" stroke="#e6e6e6" stroke-width="2"/></svg><div class="t" style="left:863.79px;top:385.32px;font-size:27.614px;line-height:27.614px;color:#e6e6e6;transform:scaleY(1.0621);transform-origin:0 23.38px;">Recommended</div><div class="r" style="left:813px;top:451.5px;width:360px;height:2.0px;background:#3a3a3a;"></div><svg class="r" style="left:811px;top:494px;" width="34" height="30" viewBox="0 0 34 30"><path d="M13 26 H3 V3 H29 V12" fill="none" stroke="#e6e6e6" stroke-width="2"/><line x1="3" y1="8.5" x2="29" y2="8.5" stroke="#e6e6e6" stroke-width="2"/><path d="M17 27.5 L18.5 22 L29 11.5 a2.5 2.5 0 0 1 3.5 3.5 L22 25.5 z" fill="none" stroke="#e6e6e6" stroke-width="2" stroke-linejoin="round"/></svg><div class="t" style="left:863.81px;top:496.63px;font-size:27.368px;line-height:27.368px;color:#e6e6e6;transform:scaleY(1.0513);transform-origin:0 23.17px;">Edit my calendars</div><div class="r" style="left:773px;top:548px;width:440px;height:79.5px;background:#363636;"></div><svg class="r" style="left:811px;top:571px;" width="34" height="32" viewBox="0 0 34 32"><rect x="3" y="5" width="28" height="25" fill="none" stroke="#e6e6e6" stroke-width="2.2"/><line x1="3" y1="10.5" x2="31" y2="10.5" stroke="#e6e6e6" stroke-width="2"/><line x1="9" y1="2" x2="9" y2="6.5" stroke="#e6e6e6" stroke-width="2"/><line x1="25" y1="2" x2="25" y2="6.5" stroke="#e6e6e6" stroke-width="2"/><path d="M17 14 V27 M10.5 20.5 H23.5" stroke="#e6e6e6" stroke-width="2"/></svg><div class="t" style="left:864.63px;top:577.44px;font-size:27.364px;line-height:27.364px;color:#e6e6e6;transform:scaleY(1.0718);transform-origin:0 23.16px;">Create blank calendar</div><div class="r" style="left:813px;top:643.5px;width:360px;height:2.0px;background:#3a3a3a;"></div><div class="r" style="left:773px;top:659.5px;width:440px;height:80.0px;background:#10233b;"></div><svg class="r" style="left:811px;top:685px;" width="32" height="31" viewBox="0 0 32 31"><circle cx="15.5" cy="15" r="13" fill="none" stroke="#76aef0" stroke-width="2.2"/><path d="M7.6 13.3 l1.1 3.6 l1.1 -3 l1.1 3 l1.1 -3.6" fill="none" stroke="#76aef0" stroke-width="1.3"/><path d="M13.3 13.3 l1.1 3.6 l1.1 -3 l1.1 3 l1.1 -3.6" fill="none" stroke="#76aef0" stroke-width="1.3"/><path d="M19.0 13.3 l1.1 3.6 l1.1 -3 l1.1 3 l1.1 -3.6" fill="none" stroke="#76aef0" stroke-width="1.3"/></svg><div class="t" style="left:865.35px;top:687.46px;font-size:28.515px;line-height:28.515px;color:#76aef0;-webkit-text-stroke:0.98px #76aef0;transform:scaleY(0.9661);transform-origin:0 24.14px;">Subscribe from web</div><svg class="r" style="left:811px;top:764px;" width="34" height="32" viewBox="0 0 34 32"><path d="M15 29 H4 V2 H17 L24 9 V16" fill="none" stroke="#e6e6e6" stroke-width="2" stroke-linejoin="round"/><path d="M17 2 V9 H24" fill="none" stroke="#e6e6e6" stroke-width="2"/><path d="M24 31 V20 M20 24 L24 20 L28 24" fill="none" stroke="#e6e6e6" stroke-width="2"/></svg><div class="t" style="left:863.98px;top:768.02px;font-size:28.796px;line-height:28.796px;color:#e6e6e6;transform:scaleY(0.9894);transform-origin:0 24.38px;">Upload from file</div><div class="r" style="left:813px;top:836.2px;width:360px;height:2.0px;background:#3a3a3a;"></div><svg class="r" style="left:811px;top:877px;" width="32" height="31" viewBox="0 0 32 31"><circle cx="15.5" cy="15.5" r="13.5" fill="none" stroke="#e6e6e6" stroke-width="2"/><ellipse cx="15.5" cy="15.5" rx="6" ry="13.5" fill="none" stroke="#e6e6e6" stroke-width="2"/><line x1="2" y1="15.5" x2="29" y2="15.5" stroke="#e6e6e6" stroke-width="2"/><path d="M4 9 H27 M4 22 H27" stroke="#e6e6e6" stroke-width="1.8"/></svg><div class="t" style="left:863.76px;top:880.80px;font-size:28.000px;line-height:28.000px;color:#e6e6e6;transform:scaleY(1.0076);transform-origin:0 23.70px;">Holidays</div><svg class="r" style="left:811px;top:960px;" width="32" height="28" viewBox="0 0 32 28"><path d="M14.9 7 V11.8" stroke="#e6e6e6" stroke-width="2"/><circle cx="14.9" cy="3.8" r="1.3" fill="#bdbdbd"/><path d="M4.6 25 V15 a3 3 0 0 1 3 -3 H23.6 a3 3 0 0 1 3 3 V25" fill="none" stroke="#e6e6e6" stroke-width="2"/><path d="M4.6 16.8 q2.7 2.6 5.4 0 q2.7 2.6 5.4 0 q2.7 2.6 5.4 0 q2.7 2.6 5.4 0" fill="none" stroke="#e6e6e6" stroke-width="1.8"/><line x1="2.2" y1="25.4" x2="28.9" y2="25.4" stroke="#e6e6e6" stroke-width="2"/></svg><div class="t" style="left:863.78px;top:960.77px;font-size:27.794px;line-height:27.794px;color:#e6e6e6;transform:scaleY(1.0201);transform-origin:0 23.53px;">Birthdays</div><svg class="r" style="left:813px;top:1024px;" width="33" height="31" viewBox="0 0 33 31"><path d="M13 5.5 H6 a3 3 0 0 0 -3 3 V19.5 a3 3 0 0 0 3 3 H8.5 V28.5 L16.5 22.5 H24 a3 3 0 0 0 3 -3 V17" fill="none" stroke="#e6e6e6" stroke-width="2" stroke-linejoin="round"/><circle cx="24.8" cy="9" r="7" fill="#e6e6e6"/><path d="M24.8 4.8 V10" stroke="#151515" stroke-width="2.2"/><circle cx="24.8" cy="12.9" r="1.2" fill="#151515"/></svg><div class="t" style="left:811.82px;top:1061.03px;font-size:24.774px;line-height:24.774px;color:#e6e6e6;transform:scaleY(0.9584);transform-origin:0 20.97px;">Looking for additional</div><div class="t" style="left:812.89px;top:1094.84px;font-size:22.633px;line-height:22.633px;color:#e6e6e6;transform:scaleY(1.0490);transform-origin:0 19.16px;">calendars?</div><div class="t" style="left:857.08px;top:1128.34px;font-size:20.868px;line-height:20.868px;color:#5c9ee8;transform:scaleY(1.1043);transform-origin:0 17.66px;">Yes</div><div class="t" style="left:949.93px;top:1124.15px;font-size:25.814px;line-height:25.814px;color:#5c9ee8;transform:scaleY(0.8927);transform-origin:0 21.85px;">No</div><div class="t" style="left:1245.47px;top:258.79px;font-size:40.772px;line-height:40.772px;color:#dadada;-webkit-text-stroke:1.41px #dadada;transform:scaleY(0.9132);transform-origin:0 34.51px;">Subscribe from web</div><svg class="r" style="left:3255px;top:264px;" width="28" height="29" viewBox="0 0 28 29"><path d="M2.3 3.6 L25.4 26.1 M25.4 3.6 L2.3 26.1" stroke="#a4a4a4" stroke-width="1.9" stroke-linecap="round"/></svg><div class="r" style="left:1213px;top:340.7px;width:2120px;height:2.0px;background:#474747;"></div><div class="t" style="left:1251.46px;top:381.25px;font-size:28.054px;line-height:28.054px;color:#e2e2e2;transform:scaleY(0.9957);transform-origin:0 23.75px;">Paste the url for the calendar you would like to subscribe to below. Any edits that the author of the calendar makes will be updated automatically.</div><div class="r" style="left:1253px;top:476.4px;width:800px;height:64.60000000000002px;background:#262626;border-radius:4px 4px 0 0;box-shadow:inset 0 -2px 0 #a8a8a8;"></div><div class="t" style="left:1267.80px;top:497.48px;font-size:27.553px;line-height:27.553px;color:#8c8c8c;transform:scaleY(1.0898);transform-origin:0 23.32px;">Example: webcal://www.contoso.com/calendar.ics</div><div class="r" style="left:1253px;top:590px;width:172px;height:64px;background:#161616;border-radius:4px;"></div><div class="t" style="left:1293.34px;top:607.40px;font-size:31.072px;line-height:31.072px;color:#5c5c5c;-webkit-text-stroke:1.07px #5c5c5c;transform:scaleY(0.9261);transform-origin:0 26.30px;">Import</div>
</body></html>
